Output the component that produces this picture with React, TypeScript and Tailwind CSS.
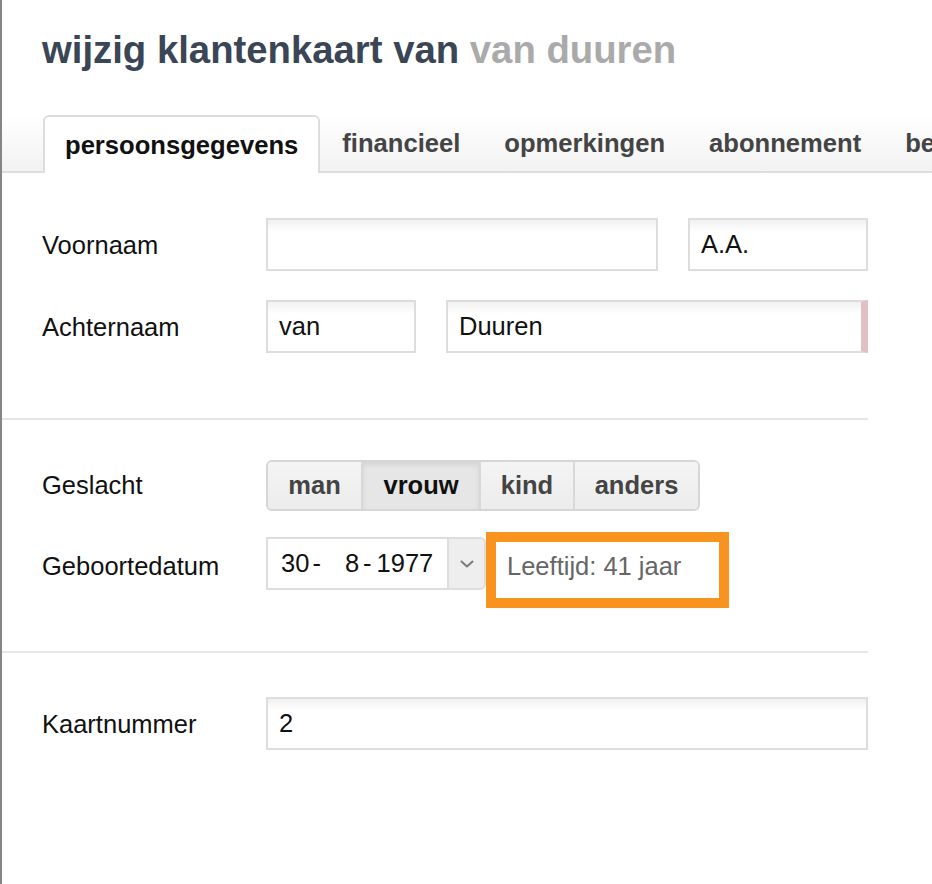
import React from 'react'

const tabs = ['persoonsgegevens', 'financieel', 'opmerkingen', 'abonnement', 'betalingen']

const genders = [
  { label: 'man', width: 'w-[93px]' },
  { label: 'vrouw', width: 'w-[118px]', active: true },
  { label: 'kind', width: 'w-[94px]' },
  { label: 'anders', width: 'w-[125px]' },
]

// invoerveld met de lichte schaduw bovenaan
const Field: React.FC<{ value?: string; className?: string }> = ({ value, className = '' }) => (
  <div
    className={`h-[53px] border-2 border-[#dddddd] bg-[linear-gradient(to_bottom,#f1f1f1,#ffffff_12px)] flex items-center px-[11px] text-[25.5px] text-[#111] ${className}`}
  >
    {value}
  </div>
)

const Label: React.FC<{ children: React.ReactNode }> = ({ children }) => (
  <div className="w-[224px] shrink-0 text-[25.5px] text-[#111]">{children}</div>
)

const Divider = () => <div className="h-[2px] w-[866px] bg-[#e6e6e6]" />

const App: React.FC = () => {
  return (
    <div className="flex min-h-[884px] bg-white font-['Liberation_Sans',Arial,sans-serif]">
      {/* pagina achter de modal */}
      <div className="w-[2px] shrink-0 bg-[#858585]" />

      <div className="flex-1 min-w-0 overflow-hidden">
        <h1 className="pt-[28px] pl-[40px] text-[38.3px] leading-[44px] font-bold text-[#3a4555] whitespace-nowrap">
          wijzig klantenkaart van <span className="text-[#aaaaaa]">van duuren</span>
        </h1>

        {/* tabs */}
        <div className="mt-[43px] h-[58px] flex items-end pl-[41px] border-b-2 border-[#dddddd] bg-[linear-gradient(to_bottom,#ffffff,#f2f2f2)] whitespace-nowrap">
          {tabs.map((tab, i) =>
            i === 0 ? (
              <div
                key={tab}
                className="h-[58px] -mb-[2px] flex items-center px-[20px] border-2 border-b-0 border-[#dddddd] rounded-t-[6px] bg-white text-[25.6px] font-bold text-[#111]"
              >
                {tab}
              </div>
            ) : (
              <div key={tab} className="h-[56px] flex items-center px-[22px] text-[25.6px] font-bold text-[#444]">
                {tab}
              </div>
            )
          )}
        </div>

        {/* naam */}
        <div className="pl-[40px] pt-[45px] flex flex-col gap-[29px]">
          <div className="flex items-center">
            <div className="pt-[2px]">
              <Label>Voornaam</Label>
            </div>
            <Field className="w-[392px]" />
            <Field className="w-[180px] ml-[30px]" value="A.A." />
          </div>
          <div className="flex items-center">
            <div className="pt-[2px]">
              <Label>Achternaam</Label>
            </div>
            <Field className="w-[150px]" value="van" />
            <Field className="w-[422px] ml-[30px] border-r-[7px] border-r-[#e0c0c2]" value="Duuren" />
          </div>
        </div>

        <div className="mt-[65px]">
          <Divider />
        </div>

        {/* geslacht en geboortedatum */}
        <div className="pl-[40px] pt-[40px] flex flex-col">
          <div className="flex items-center">
            <Label>Geslacht</Label>
            <div className="flex h-[51px] border-2 border-[#d6d6d6] rounded-[6px] overflow-hidden">
              {genders.map((g, i) => (
                <div
                  key={g.label}
                  className={`${g.width} flex items-center justify-center text-[25.5px] font-bold ${
                    i > 0 ? 'border-l-2 border-[#d8d8d8]' : ''
                  } ${
                    g.active
                      ? 'bg-[#e6e6e6] shadow-[inset_0_3px_5px_rgba(0,0,0,0.08)] text-[#111]'
                      : 'bg-[linear-gradient(to_bottom,#f4f4f4,#ececec)] text-[#444]'
                  }`}
                >
                  {g.label}
                </div>
              ))}
            </div>
          </div>

          <div className="flex items-start mt-[26px] h-[71px]">
            <div className="h-[53px] pt-[6px] flex items-center">
              <Label>Geboortedatum</Label>
            </div>
            <div className="flex h-[53px]">
              <div className="w-[181px] border-2 border-r-0 border-[#dddddd] bg-white flex items-center pl-[13px] text-[25.5px] text-[#111] whitespace-pre">
                <span>30</span>
                <span className="ml-[3px]">-</span>
                <span className="ml-[24px]">8</span>
                <span className="ml-[4px]">-</span>
                <span className="ml-[5px]">1977</span>
              </div>
              <div className="w-[39px] border-2 border-[#dddddd] rounded-r-[6px] bg-[#eeeeee] flex items-center justify-center">
                <svg width="14" height="8" viewBox="0 0 14 8" fill="none">
                  <path d="M1.5 1.5 7 6.5l5.5-5" stroke="#7a7a7a" strokeWidth="2" strokeLinecap="round" strokeLinejoin="round" />
                </svg>
              </div>
            </div>
            <div className="-mt-[5px] w-[243px] h-[76px] border-[10px] border-[#f7931e] bg-white flex items-center pl-[11px] pb-[7px] text-[25.5px] text-[#666]">
              Leeftijd: 41 jaar
            </div>
          </div>
        </div>

        <div className="mt-[43px]">
          <Divider />
        </div>

        {/* kaartnummer */}
        <div className="pl-[40px] pt-[44px]">
          <div className="flex items-center">
            <div className="pt-[2px]">
              <Label>Kaartnummer</Label>
            </div>
            <Field className="w-[602px]" value="2" />
          </div>
        </div>
      </div>
    </div>
  )
}

export default App
